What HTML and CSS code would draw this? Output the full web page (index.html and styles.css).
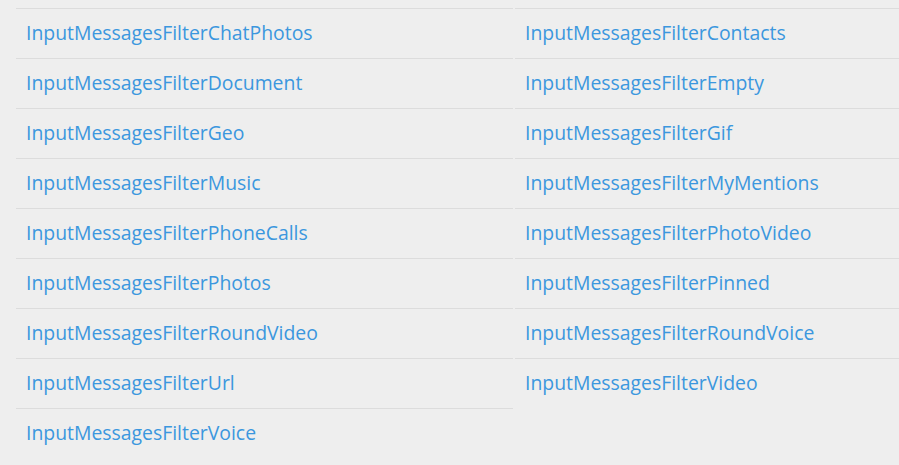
FILE: index.html
```html
<!DOCTYPE html>
<html>
<head>
<meta charset="utf-8">
<link rel="stylesheet" href="styles.css">
</head>
<body>
<div class="list">
  <a class="item" href="#">InputMessagesFilterChatPhotos</a>
  <a class="item" href="#">InputMessagesFilterContacts</a>
  <a class="item" href="#">InputMessagesFilterDocument</a>
  <a class="item" href="#">InputMessagesFilterEmpty</a>
  <a class="item" href="#">InputMessagesFilterGeo</a>
  <a class="item" href="#">InputMessagesFilterGif</a>
  <a class="item" href="#">InputMessagesFilterMusic</a>
  <a class="item" href="#">InputMessagesFilterMyMentions</a>
  <a class="item" href="#">InputMessagesFilterPhoneCalls</a>
  <a class="item" href="#">InputMessagesFilterPhotoVideo</a>
  <a class="item" href="#">InputMessagesFilterPhotos</a>
  <a class="item" href="#">InputMessagesFilterPinned</a>
  <a class="item" href="#">InputMessagesFilterRoundVideo</a>
  <a class="item" href="#">InputMessagesFilterRoundVoice</a>
  <a class="item" href="#">InputMessagesFilterUrl</a>
  <a class="item" href="#">InputMessagesFilterVideo</a>
  <a class="item" href="#">InputMessagesFilterVoice</a>
</div>
</body>
</html>
```
FILE: styles.css
```css
html, body {
  margin: 0;
  padding: 0;
  background: #eeeeee;
  overflow: hidden;
}
body {
  width: 899px;
  height: 465px;
}
.list {
  display: grid;
  grid-template-columns: 497px 497px;
  column-gap: 2px;
  width: 883px;
  overflow: hidden;
  padding: 8px 0 0 16px;
  font-family: "Open Sans", "Noto Sans", sans-serif;
}
.item {
  display: flex;
  align-items: center;
  height: 47px;
  padding-bottom: 2px;
  border-top: 1px solid #dcdcdc;
  padding-left: 10px;
  color: #3b97de;
  text-decoration: none;
  font-size: 19.4px;
  white-space: nowrap;
}
```
